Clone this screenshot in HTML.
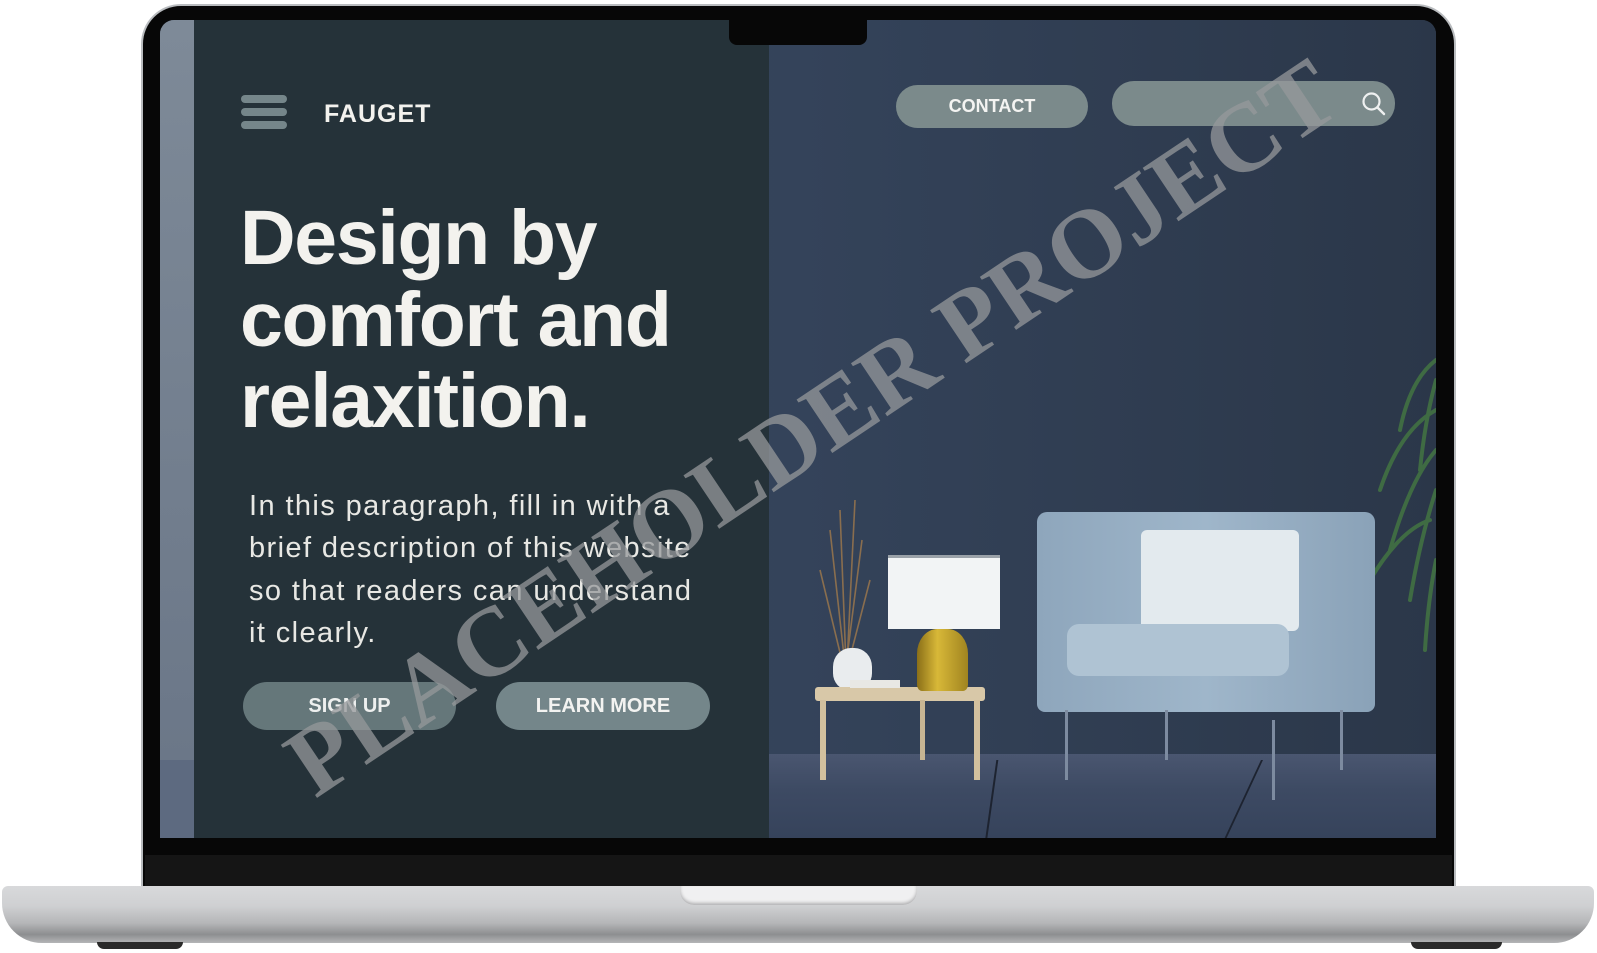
<!DOCTYPE html>
<html><head><meta charset="utf-8"><style>
*{margin:0;padding:0;box-sizing:border-box}
html,body{width:1597px;height:953px;background:#fff;overflow:hidden;position:relative;font-family:"Liberation Sans",sans-serif}
.abs{position:absolute}
</style></head><body>
<div class="abs" style="left:141px;top:4px;width:1315px;height:890px;background:#b9bcbf;border-radius:40px 40px 0 0"></div>
<div class="abs" style="left:143px;top:6px;width:1311px;height:888px;background:#070707;border-radius:38px 38px 0 0"></div>
<div class="abs" style="left:145px;top:855px;width:1307px;height:32px;background:#151515"></div>
<div class="abs" style="left:160px;top:20px;width:1276px;height:818px;overflow:hidden;border-radius:14px 14px 0 0;background:#2f3c50">
  <div class="abs" style="left:0;top:0;width:1276px;height:740px;background:linear-gradient(90deg,#3b4a5e 0%,#34435a 50%,#2b3749 100%)"></div>
  <div class="abs" style="left:0;top:734px;width:1276px;height:90px;background:linear-gradient(180deg,#4a5670,#3d4a63 40%,#35425a)"></div>
  <div class="abs" style="left:830px;top:740px;width:2px;height:90px;background:#1d2330;transform:skewX(-8deg)"></div>
  <div class="abs" style="left:1080px;top:740px;width:2px;height:90px;background:#1d2330;transform:skewX(-25deg)"></div>
  <svg class="abs" style="left:1190px;top:300px" width="86" height="340" viewBox="0 0 86 340">
    <g stroke="#3f6b43" stroke-width="4" fill="none" stroke-linecap="round">
      <path d="M86 40 Q60 60 50 110"/><path d="M86 90 Q50 110 30 170"/><path d="M86 130 Q60 160 40 230"/>
      <path d="M86 170 Q70 220 60 280"/><path d="M86 60 Q75 100 70 150"/><path d="M80 200 Q50 210 20 260"/>
      <path d="M86 240 Q78 280 75 330"/>
    </g>
  </svg>
  <svg class="abs" style="left:650px;top:470px" width="70" height="180" viewBox="0 0 70 180">
    <g stroke="#8a6e4e" stroke-width="1.6" fill="none">
      <path d="M35 175 L20 40"/><path d="M37 175 L45 10"/><path d="M33 175 L10 80"/><path d="M38 175 L60 90"/><path d="M36 175 L30 20"/><path d="M36 175 L52 50"/>
    </g>
  </svg>
  <div class="abs" style="left:673px;top:628px;width:39px;height:42px;background:#e9ecee;border-radius:45% 45% 40% 40%"></div>
  <div class="abs" style="left:655px;top:667px;width:170px;height:14px;background:#d8c8a8;border-radius:3px"></div>
  <div class="abs" style="left:660px;top:680px;width:6px;height:80px;background:#d2c09e"></div>
  <div class="abs" style="left:814px;top:680px;width:6px;height:80px;background:#d2c09e"></div>
  <div class="abs" style="left:760px;top:680px;width:5px;height:60px;background:#c7b593"></div>
  <div class="abs" style="left:690px;top:660px;width:50px;height:8px;background:#e8e8e4"></div>
  <div class="abs" style="left:728px;top:535px;width:112px;height:74px;background:#f2f4f5;border-top:3px solid #9aa1a8"></div>
  <div class="abs" style="left:757px;top:609px;width:51px;height:62px;background:linear-gradient(90deg,#8a6f18,#d8b838 40%,#a08420);border-radius:40% 40% 10% 10%"></div>
  <div class="abs" style="left:877px;top:492px;width:338px;height:200px;background:linear-gradient(90deg,#8ea6bc,#9fb6ca 50%,#8aa2b8);border-radius:10px 10px 8px 8px"></div>
  <div class="abs" style="left:981px;top:510px;width:158px;height:101px;background:#e3eaee;border-radius:6px"></div>
  <div class="abs" style="left:907px;top:604px;width:222px;height:52px;background:#afc3d3;border-radius:12px"></div>
  <div class="abs" style="left:905px;top:690px;width:3px;height:70px;background:#7d8ba0"></div>
  <div class="abs" style="left:1005px;top:690px;width:3px;height:50px;background:#7d8ba0"></div>
  <div class="abs" style="left:1112px;top:700px;width:3px;height:80px;background:#7d8ba0"></div>
  <div class="abs" style="left:1180px;top:690px;width:3px;height:60px;background:#7d8ba0"></div>
  <div class="abs" style="left:0;top:0;width:34px;height:740px;background:linear-gradient(180deg,#7e8a98,#6b7788)"></div>
  <div class="abs" style="left:0;top:740px;width:34px;height:80px;background:#5d6a80"></div>
  <div class="abs" style="left:34px;top:0;width:575px;height:818px;background:#253239"></div>
  <div class="abs" style="left:81px;top:75px;width:46px;height:8px;background:#75868a;border-radius:4px"></div>
  <div class="abs" style="left:81px;top:88px;width:46px;height:8px;background:#75868a;border-radius:4px"></div>
  <div class="abs" style="left:81px;top:101px;width:46px;height:8px;background:#75868a;border-radius:4px"></div>
  <div class="abs" style="left:164px;top:80px;color:#f3f2ee;font-weight:700;font-size:25px;letter-spacing:1px">FAUGET</div>
  <div class="abs" style="left:80px;top:178px;color:#f3f2ee;font-weight:700;font-size:77px;line-height:81.5px;letter-spacing:-1.3px;white-space:nowrap">Design by<br>comfort and<br>relaxition.</div>
  <div class="abs" style="left:89px;top:465px;color:#e8e8e4;font-size:29px;line-height:42.3px;letter-spacing:1.4px;white-space:nowrap">In this paragraph, fill in with a<br>brief description of this website<br>so that readers can understand<br>it clearly.</div>
  <div class="abs" style="left:83px;top:662px;width:213px;height:48px;background:#65777a;border-radius:24px;color:#eef0ef;font-weight:700;font-size:20px;line-height:48px;text-align:center">SIGN UP</div>
  <div class="abs" style="left:336px;top:662px;width:214px;height:48px;background:#74868a;border-radius:24px;color:#f3f3f1;font-weight:700;font-size:20px;line-height:48px;text-align:center">LEARN MORE</div>
  <div class="abs" style="left:736px;top:65px;width:192px;height:43px;background:#7b8a8b;border-radius:22px;color:#f4f4f2;font-weight:700;font-size:18px;line-height:43px;text-align:center">CONTACT</div>
  <div class="abs" style="left:952px;top:61px;width:283px;height:45px;background:#7b8a8b;border-radius:22px"></div>
  <svg class="abs" style="left:1201px;top:71px" width="26" height="26" viewBox="0 0 26 26"><circle cx="10.5" cy="10.5" r="8" stroke="#eef0f0" stroke-width="2.2" fill="none"/><path d="M16.5 16.5 L23 23" stroke="#eef0f0" stroke-width="2.4" stroke-linecap="round"/></svg>
  <div class="abs" style="left:569px;top:0;width:138px;height:25px;background:#070707;border-radius:0 0 8px 8px"></div>
</div>
<div class="abs" style="left:812px;top:428px;transform:translate(-50%,-50%) rotate(-33.8deg);font-family:'Liberation Serif',serif;font-weight:700;font-size:98px;color:rgba(150,152,155,0.75);white-space:nowrap;line-height:1">PLACEHOLDER PROJECT</div>
<div class="abs" style="left:2px;top:886px;width:1592px;height:57px;background:linear-gradient(180deg,#d8d9db 0%,#cfd0d2 35%,#b5b6b8 65%,#8d8e90 85%,#b4b5b7 100%);border-radius:6px 6px 40px 40px"></div>
<div class="abs" style="left:680px;top:886px;width:237px;height:19px;background:#f0f0f1;border-radius:0 0 14px 14px;box-shadow:inset 0 -2px 3px #b0b0b2"></div>
<div class="abs" style="left:97px;top:942px;width:86px;height:7px;background:#2a2a2a;border-radius:0 0 8px 8px"></div>
<div class="abs" style="left:1411px;top:942px;width:91px;height:7px;background:#2a2a2a;border-radius:0 0 8px 8px"></div>
</body></html>
